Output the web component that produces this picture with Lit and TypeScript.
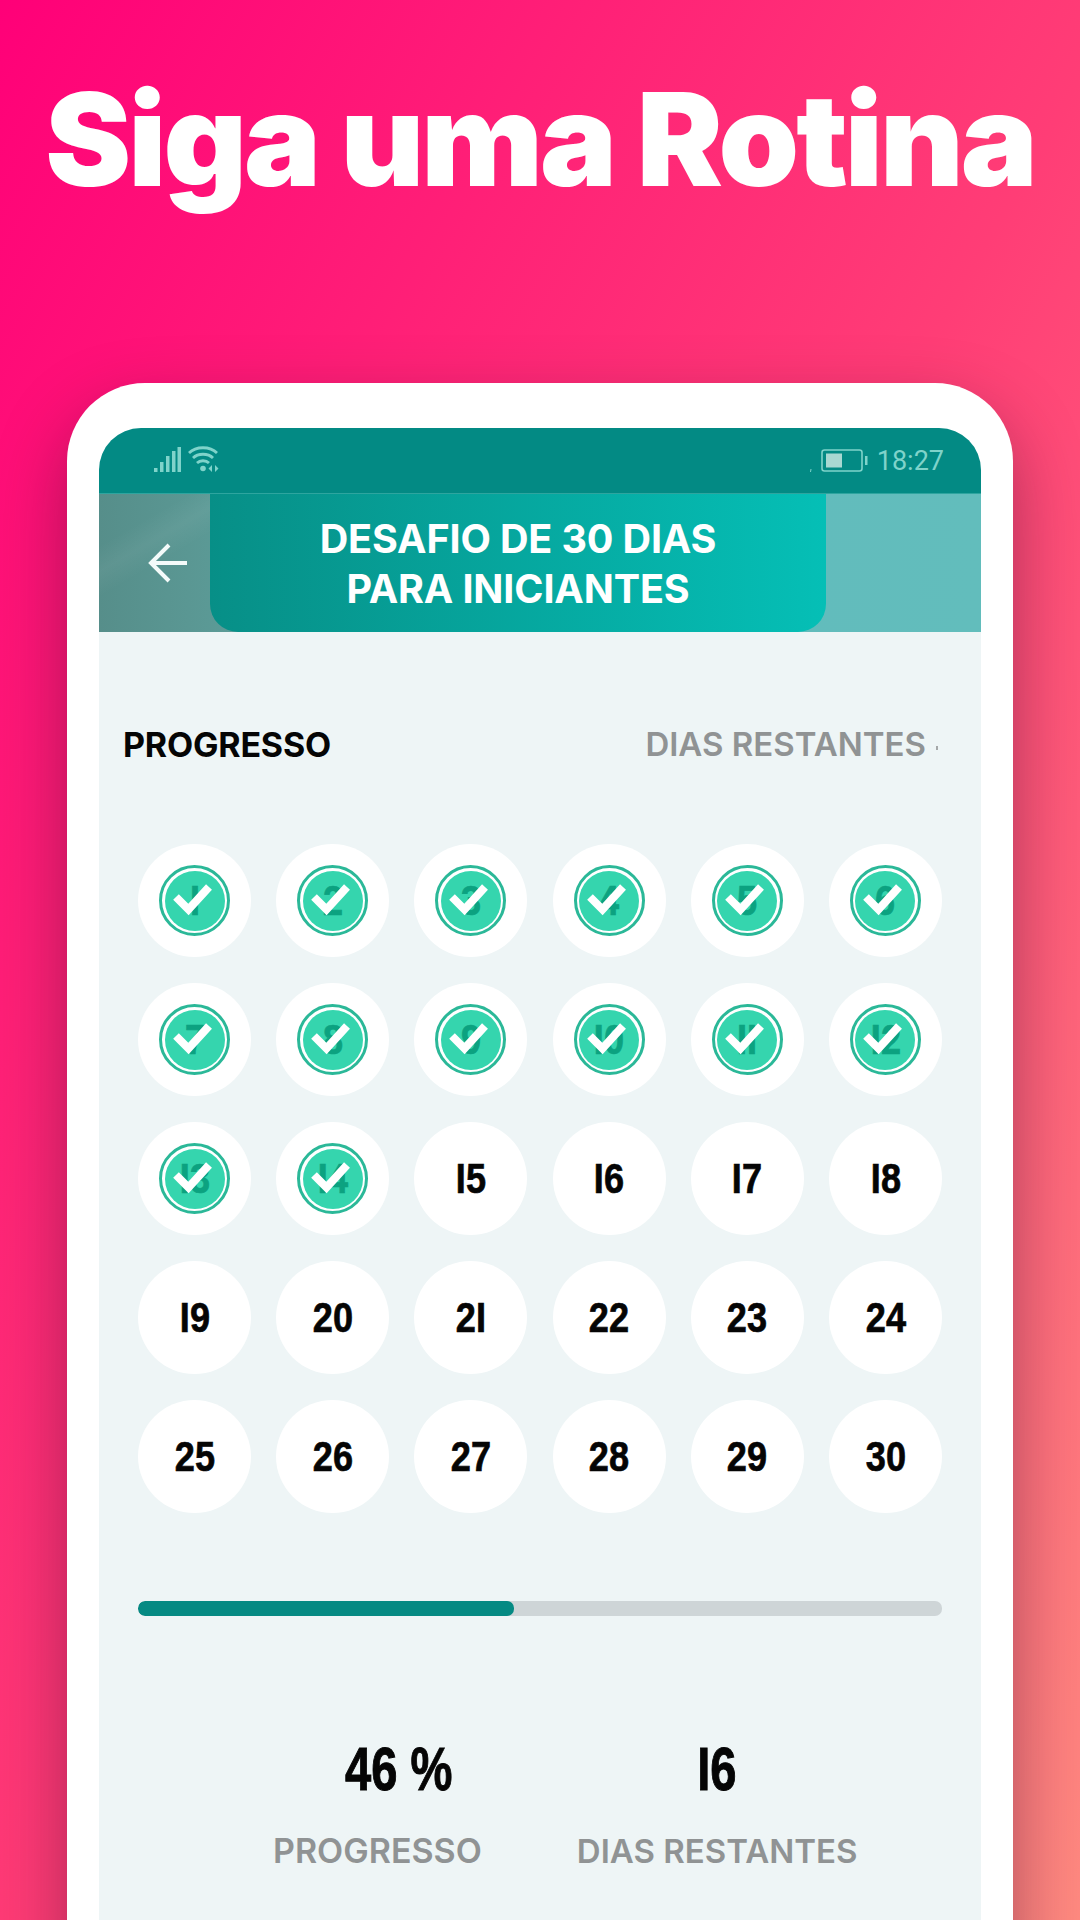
import { LitElement, html, css, svg } from "lit";
import { customElement } from "lit/decorators.js";

// The reference's display face draws the numeral one as a plain bar.
const face = (n: number | string) => String(n).replace(/1/g, "I");

@customElement("app-root")
export class AppRoot extends LitElement {
  static styles = css`
    :host {
      display: block;
      width: 1080px;
      height: 1920px;
      overflow: hidden;
      background: linear-gradient(to bottom right, #ff0078 0%, #ff3d76 52%, #ff8a80 100%);
      font-family: Inter, "Liberation Sans", sans-serif;
    }
    .title {
      height: 383px;
      box-sizing: border-box;
      margin: 0;
      padding-top: 64px;
      text-align: center;
      color: #fff;
      font-size: 129px;
      line-height: 150px;
      font-weight: 900;
      letter-spacing: -3px;
      white-space: nowrap;
    }
    .phone {
      width: 946px;
      height: 1600px;
      margin-left: 67px;
      box-sizing: border-box;
      padding: 45px 32px 0;
      background: #fff;
      border-radius: 78px 78px 0 0;
      box-shadow: 0 30px 70px rgba(60, 10, 40, 0.42);
    }
    .screen {
      height: 100%;
      background: #eef5f6;
      border-radius: 42px 42px 0 0;
      overflow: hidden;
    }
    .status {
      height: 66px;
      box-sizing: border-box;
      padding: 18px 37px 0 55px;
      background: #038a84;
      display: flex;
      align-items: flex-start;
      color: #7fd3ca;
      border-bottom: 1px solid #2ea59f;
    }
    .signal { display: block; margin-right: 7px; }
    .spacer { flex: 1; }
    .time {
      font-family: Roboto, sans-serif;
      font-size: 27px;
      line-height: 30px;
      margin-left: 9px;
    }
    .battery { display: block; margin-top: 3px; }
    .header {
      height: 138px;
      display: flex;
      background:
        linear-gradient(150deg, rgba(255, 255, 255, 0) 8%, rgba(255, 255, 255, 0.05) 12%, rgba(255, 255, 255, 0) 16%),
        linear-gradient(90deg, #568e8a 0%, #5d9e9a 18%, #62bcbc 80%, #62bdbc 100%);
    }
    .back {
      width: 111px;
      box-sizing: border-box;
      padding: 0 0 0 49px;
      display: flex;
      align-items: center;
    }
    .panel {
      width: 616px;
      background: linear-gradient(90deg, #078f87 0%, #05bfb6 100%);
      border-radius: 0 0 28px 28px;
      color: #fff;
      font-size: 39.5px;
      line-height: 50px;
      font-weight: 700;
      letter-spacing: -0.13px;
      text-align: center;
      padding-top: 20px;
      box-sizing: border-box;
    }
    .tabs {
      display: flex;
      justify-content: space-between;
      align-items: center;
      margin: 90px 43px 0 24px;
      height: 44px;
      font-size: 33px;
      font-weight: 600;
    }
    .tabs .on { color: #050505; font-weight: 700; font-size: 34px; letter-spacing: -0.2px; }
    .tabs .off { color: #909394; }
    .tabs .next { display: inline-block; width: 2px; height: 4px; background: #a5a8a9; margin-left: 10px; vertical-align: 6px; }
    .grid {
      display: grid;
      grid-template-columns: repeat(6, 113px);
      justify-content: space-between;
      row-gap: 26px;
      margin: 78px 39px 0 39px;
    }
    .day {
      width: 113px;
      height: 113px;
      border-radius: 50%;
      background: #fff;
      display: flex;
      align-items: center;
      justify-content: center;
      position: relative;
      font-family: "Liberation Sans", sans-serif;
      font-weight: 700;
      font-size: 43px;
      color: #050505;
    }
    .num {
      display: inline-block;
      transform: scaleX(0.84);
      -webkit-text-stroke: 0.7px currentColor;
    }
    .badge {
      position: absolute;
      left: 21px;
      top: 21px;
      width: 71px;
      height: 71px;
      box-sizing: border-box;
      border-radius: 50%;
      border: 3px solid #2bb898;
      padding: 2.5px;
      background: #fff;
    }
    .fill {
      width: 100%;
      height: 100%;
      border-radius: 50%;
      background: #35d5ae;
      display: flex;
      align-items: center;
      justify-content: center;
      color: #0ca280;
      position: relative;
    }
    .check { position: absolute; left: 0; top: 0; }
    .bar {
      margin: 88px 39px 0 39px;
      height: 15px;
      border-radius: 7px;
      background: #ced5d7;
      overflow: hidden;
    }
    .bar div {
      height: 100%;
      background: #058a83;
      border-radius: 7px;
    }
    .stats {
      display: flex;
      gap: 95px;
      margin: 118px 0 0 174px;
    }
    .stat { display: flex; flex-direction: column; }
    .value {
      font-family: "Liberation Sans", sans-serif;
      font-weight: 700;
      font-size: 62px;
      line-height: 70px;
      color: #050505;
      text-align: center;
    }
    .value .num { transform: scaleX(0.76); -webkit-text-stroke: 1px currentColor; }
    .value.shift { padding-left: 42px; }
    .label {
      margin-top: 27px;
      font-size: 33px;
      line-height: 40px;
      font-weight: 600;
      color: #909394;
      white-space: nowrap;
    }
    .label.wide { font-size: 34px; }
  `;

  private renderDay(n: number) {
    const done = n <= 14;
    const num = html`<span class="num">${face(n)}</span>`;
    return html`<div class="day" aria-label=${String(n)}>
      ${done
        ? html`<div class="badge">
            <div class="fill">
              ${num}
              <svg class="check" width="54" height="54" viewBox="-27.5 -27 54 54" fill="none">
                ${svg`<path d="M-16.5 -1 L-4 11.5 L16.5 -11" stroke="#fff" stroke-width="8"/>`}
              </svg>
            </div>
          </div>`
        : num}
    </div>`;
  }

  render() {
    const days = Array.from({ length: 30 }, (_, i) => i + 1);
    return html`
      <h1 class="title">Siga uma Rotina</h1>
      <div class="phone">
        <div class="screen">
          <div class="status">
            <svg class="signal" width="27" height="27" viewBox="0 0 27 27" fill="#7fd3ca">
              <rect x="0" y="22" width="3.5" height="4"/>
              <rect x="6" y="16" width="3.5" height="10"/>
              <rect x="12" y="10" width="3.5" height="16"/>
              <rect x="18" y="5" width="3.5" height="21"/>
              <rect x="23.5" y="1" width="3.5" height="25"/>
            </svg>
            <svg width="32" height="28" viewBox="0 0 32 28" fill="none" stroke="#7fd3ca" stroke-width="2.8">
              <path d="M1 7 C8 0 22 0 29 7"/>
              <path d="M5 12 C10 7 20 7 25 12"/>
              <path d="M9 17 C12 14 18 14 21 17"/>
              <circle cx="15" cy="22.5" r="2.8" fill="#7fd3ca" stroke="none"/>
              <path d="M24 19 L20.5 22.5 L24 26 Z M27 19 L30.5 22.5 L27 26 Z" fill="#7fd3ca" stroke="none"/>
            </svg>
            <div class="spacer"></div>
            <svg class="battery" width="58" height="24" viewBox="0 0 58 24" fill="none">
              <path d="M1 20 L0.5 23" stroke="#7fd3ca" stroke-width="1"/>
              <rect x="12" y="1" width="40" height="21" rx="2.5" stroke="#7fd3ca" stroke-width="1.6"/>
              <rect x="16" y="4.5" width="16" height="14" fill="#a8d8d2"/>
              <rect x="55" y="7" width="2.5" height="9" fill="#7fd3ca"/>
            </svg>
            <span class="time">18:27</span>
          </div>
          <div class="header">
            <div class="back">
              <svg width="40" height="40" viewBox="0 0 40 40" fill="none" stroke="#f4fbfa" stroke-width="4">
                <path d="M39 20 H3"/>
                <path d="M21 2 L3 20 L21 38"/>
              </svg>
            </div>
            <div class="panel">DESAFIO DE 30 DIAS<br />PARA INICIANTES</div>
          </div>
          <div class="tabs">
            <span class="on">PROGRESSO</span>
            <span class="off">DIAS RESTANTES<i class="next"></i></span>
          </div>
          <div class="grid">${days.map((n) => this.renderDay(n))}</div>
          <div class="bar"><div style="width: ${(376 / 804) * 100}%"></div></div>
          <div class="stats">
            <div class="stat">
              <div class="value shift"><span class="num">46 %</span></div>
              <div class="label wide">PROGRESSO</div>
            </div>
            <div class="stat">
              <div class="value"><span class="num">${face(16)}</span></div>
              <div class="label">DIAS RESTANTES</div>
            </div>
          </div>
        </div>
      </div>
    `;
  }
}
